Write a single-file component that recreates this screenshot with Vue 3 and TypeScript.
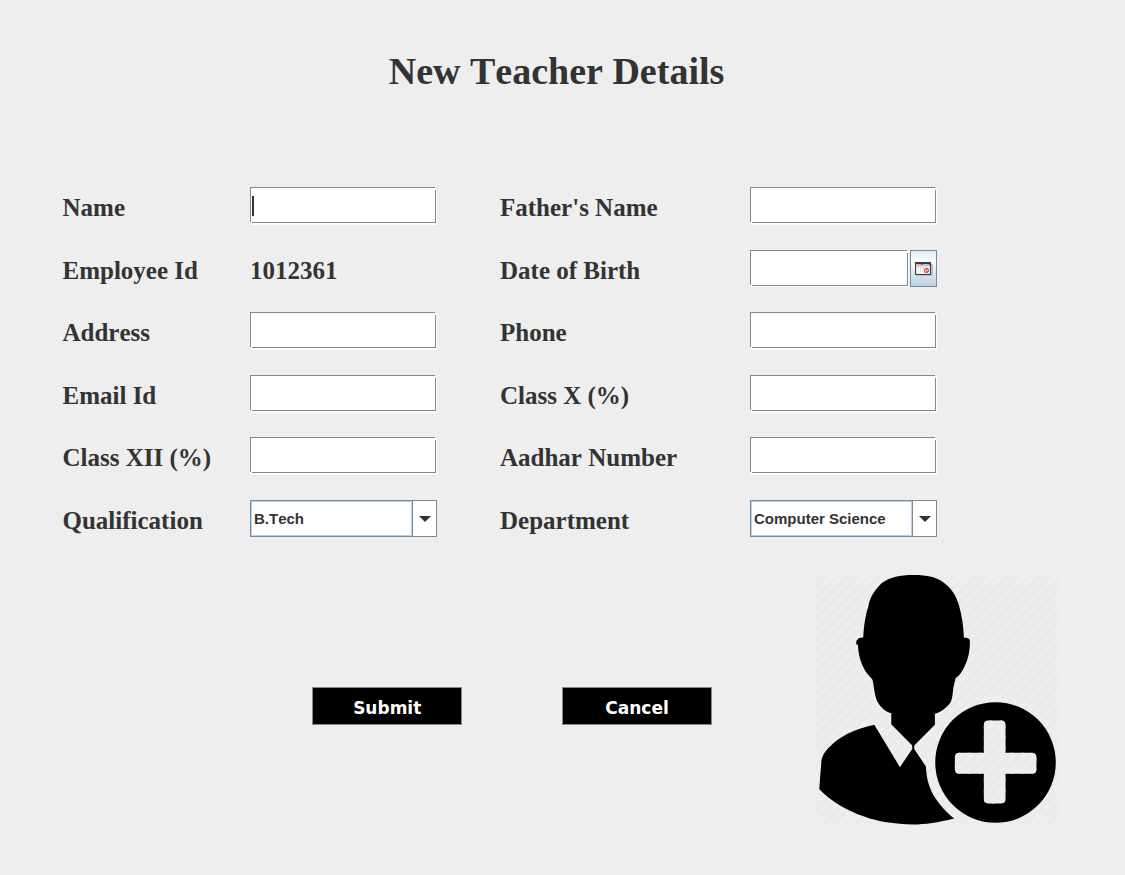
<script setup lang="ts">
import { reactive } from 'vue'

type Kind = 'text' | 'static' | 'date' | 'select'

interface Field {
  id: string
  label: string
  kind: Kind
  options?: string[]
  active?: boolean
}

const fields: Field[] = [
  { id: 'name', label: 'Name', kind: 'text', active: true },
  { id: 'father', label: "Father's Name", kind: 'text' },
  { id: 'employee', label: 'Employee Id', kind: 'static' },
  { id: 'birth', label: 'Date of Birth', kind: 'date' },
  { id: 'address', label: 'Address', kind: 'text' },
  { id: 'phone', label: 'Phone', kind: 'text' },
  { id: 'email', label: 'Email Id', kind: 'text' },
  { id: 'classx', label: 'Class X (%)', kind: 'text' },
  { id: 'classxii', label: 'Class XII (%)', kind: 'text' },
  { id: 'aadhar', label: 'Aadhar Number', kind: 'text' },
  { id: 'qualification', label: 'Qualification', kind: 'select', options: ['B.Tech'] },
  { id: 'department', label: 'Department', kind: 'select', options: ['Computer Science'] },
]

const values = reactive<Record<string, string>>({
  name: '',
  father: '',
  employee: '1012361',
  birth: '',
  address: '',
  phone: '',
  email: '',
  classx: '',
  classxii: '',
  aadhar: '',
  qualification: 'B.Tech',
  department: 'Computer Science',
})
</script>

<template>
  <main class="page">
    <h1 class="title">New Teacher Details</h1>
    <form @submit.prevent>
      <div class="fields">
        <template v-for="(field, i) in fields" :key="field.id">
          <label class="label" :class="{ first: i % 2 === 0 }" :for="field.id">{{ field.label }}</label>
          <output v-if="field.kind === 'static'" :id="field.id" class="label">{{ values[field.id] }}</output>
          <div v-else-if="field.kind === 'select'" class="control combo">
            <select :id="field.id" v-model="values[field.id]">
              <option v-for="option in field.options" :key="option">{{ option }}</option>
            </select>
            <svg class="arrow" viewBox="0 0 12 6" aria-hidden="true">
              <path d="M0 0H12L6 6Z" fill="#333" />
            </svg>
          </div>
          <div v-else-if="field.kind === 'date'" class="control date">
            <input :id="field.id" v-model="values[field.id]" class="box" type="text" />
            <button class="picker" type="button" aria-label="Choose date">
              <svg viewBox="0 0 18 14" shape-rendering="crispEdges" aria-hidden="true">
                <path d="M1 2H18V14H1Z" fill="#bfbfbf" />
                <path d="M0 0H16V13H0Z" fill="#3c3c3c" />
                <path d="M1 3H15V12H1Z" fill="#e3e3e3" />
                <path d="M1 2H6V3H1Z" fill="#f7b543" />
                <path d="M6 2H8V3H6Z" fill="#777" />
                <path d="M8 2H14V3H8Z" fill="#a4c8ee" />
                <path d="M1 3H15V4H1Z" fill="#c6c3bd" />
                <path d="M2 6H3V12H2ZM4 6H5V12H4ZM6 6H8V12H6Z" fill="#fff" />
                <path d="M10 6H13V7H14V10H13V11H10V10H9V7H10Z" fill="#e05a62" />
                <path d="M10 7H11V8H10ZM11 8H13V9H11ZM10 9H11V10H10Z" fill="#f6d5d5" />
              </svg>
            </button>
          </div>
          <div v-else class="control">
            <input :id="field.id" v-model="values[field.id]" class="box" :class="{ active: field.active }" type="text" />
          </div>
        </template>
      </div>
      <div class="footer">
        <button class="action submit" type="submit">Submit</button>
        <button class="action" type="button">Cancel</button>
        <svg class="portrait" viewBox="21 24 750 756" role="img" aria-label="Add teacher">
          <defs>
            <pattern id="hatch" width="32" height="32" patternUnits="userSpaceOnUse">
              <path d="M-8 8L8 -8M0 32L32 0M24 40L40 24" stroke="#e9e9e9" stroke-width="6" />
            </pattern>
          </defs>
          <path d="M30 36H765V774H30Z" fill="url(#hatch)" />
          <path d="M325 30C370 30 395 38 413 50C440 68 455 95 462 120C472 155 476 185 477 218L490 220L495 225V240C494 275 480 310 462 332L452 340L445 370C443 395 441 405 437 412C428 428 405 442 390 447V480L325 545L259 478V445C240 440 225 425 215 405C208 385 207 365 203 345C195 332 185 330 172 300C163 280 160 260 159 240L154 238V228L162 219L175 218C176 190 180 155 190 125C195 95 210 75 230 55C255 36 285 30 325 30Z" />
          <path d="M208 480L285 607L325 548L363 605C365 640 370 660 385 690C400 715 425 745 448 761C400 773 360 779 325 779C270 778 215 770 180 756C120 735 80 710 43 673C45 640 47 620 49 590C52 570 60 560 75 545C105 515 150 492 208 480ZM322 540H328V552H322Z" />
          <circle cx="572" cy="593" r="181" />
          <path d="M537 564V480Q537 467 550 467H589Q602 467 602 480V564H681Q695 564 695 578V613Q695 627 681 627H602V703Q602 716 589 716H550Q537 716 537 703V627H464Q450 627 450 613V578Q450 564 464 564Z" fill="#eee" />
          <path d="M537 564V480Q537 467 550 467H589Q602 467 602 480V564H681Q695 564 695 578V613Q695 627 681 627H602V703Q602 716 589 716H550Q537 716 537 703V627H464Q450 627 450 613V578Q450 564 464 564Z" fill="url(#hatch)" />
        </svg>
      </div>
    </form>
  </main>
</template>

<style>
body {
  margin: 0;
  background: #eee;
}
</style>

<style scoped>
.page {
  box-sizing: border-box;
  min-height: 100vh;
  padding: 47px 0;
  color: #333;
  background: #eee;
  font-family: "Liberation Serif", "Times New Roman", serif;
  font-kerning: none;
}

.title {
  margin: 0;
  padding-right: 12px;
  font-size: 38px;
  line-height: 48px;
  text-align: center;
}

.fields {
  display: grid;
  grid-template-columns: 1fr 3fr 4fr 4fr 3fr 3fr;
  grid-template-rows: repeat(3, 63px 62px);
  align-items: start;
  margin-top: 92px;
}

.label {
  font-size: 25px;
  font-weight: bold;
  line-height: 42px;
  white-space: nowrap;
}

.first {
  grid-column: 2;
}

.control {
  display: flex;
  box-sizing: border-box;
  width: 187px;
  max-width: 100%;
  height: 37px;
}

.box {
  --edge: linear-gradient(#7a8a99, #7a8a99);
  --notch: linear-gradient(#eee, #eee);
  flex: 1;
  box-sizing: border-box;
  min-width: 0;
  height: 36px;
  margin: 0 1px 0 0;
  padding: 0 4px;
  border: 0;
  outline: 0;
  border-radius: 0;
  color: #333;
  font: 18px "Liberation Serif", serif;
  background:
    var(--notch) right top / 1px 1px no-repeat,
    var(--notch) left bottom / 1px 1px no-repeat,
    var(--edge) left top / calc(100% - 1px) 1px no-repeat,
    var(--edge) left top / 1px calc(100% - 1px) no-repeat,
    var(--edge) right bottom / 1px calc(100% - 3px) no-repeat,
    var(--edge) right bottom / calc(100% - 2px) 1px no-repeat,
    #fff;
  box-shadow: 1px 2px 0 #fff;
}

.active {
  background:
    linear-gradient(#333, #333) 2px 9px / 2px 20px no-repeat,
    var(--notch) right top / 1px 1px no-repeat,
    var(--notch) left bottom / 1px 1px no-repeat,
    var(--edge) left top / calc(100% - 1px) 1px no-repeat,
    var(--edge) left top / 1px calc(100% - 1px) no-repeat,
    var(--edge) right bottom / 1px calc(100% - 3px) no-repeat,
    var(--edge) right bottom / calc(100% - 2px) 1px no-repeat,
    #fff;
}

.date .box {
  margin-right: 2px;
  box-shadow: 1px 1px 0 #fff;
}

.picker {
  display: flex;
  box-sizing: border-box;
  width: 27px;
  height: 37px;
  padding: 11px 4px;
  border: 1px solid #7a8a99;
  background: linear-gradient(#dde8f3, #fff 30%, #b8cfe5);
}

.picker svg {
  flex: none;
  width: 18px;
  height: 14px;
}

.combo {
  position: relative;
  border: 1px solid #7a8a99;
  background: #fff;
}

.combo select {
  flex: 1;
  min-width: 0;
  margin: 0;
  padding: 0 2px;
  border: 1px solid #b8cfe5;
  border-radius: 0;
  outline: 0;
  appearance: none;
  color: #333;
  background: #fff;
  font: bold 15px "Liberation Sans", Arial, sans-serif;
  font-kerning: none;
}

.combo::after {
  content: "";
  width: 23px;
  border-left: 1px solid #7a8a99;
}

.arrow {
  position: absolute;
  top: 15px;
  right: 5px;
  width: 12px;
  height: 6px;
  pointer-events: none;
}

.footer {
  display: grid;
  grid-template-columns: 5fr 4fr 4fr 4fr 1fr;
  align-items: start;
  margin-top: 11px;
  padding-right: 1px;
}

.action {
  width: 150px;
  height: 38px;
  margin-top: 114px;
  padding: 4px 0 0;
  border: 1px solid #7a8a99;
  color: #fff;
  background: #000;
  font: bold 17px "DejaVu Sans", Verdana, sans-serif;
}

.submit {
  grid-column: 2;
}

.portrait {
  display: block;
  width: 100%;
}
</style>
